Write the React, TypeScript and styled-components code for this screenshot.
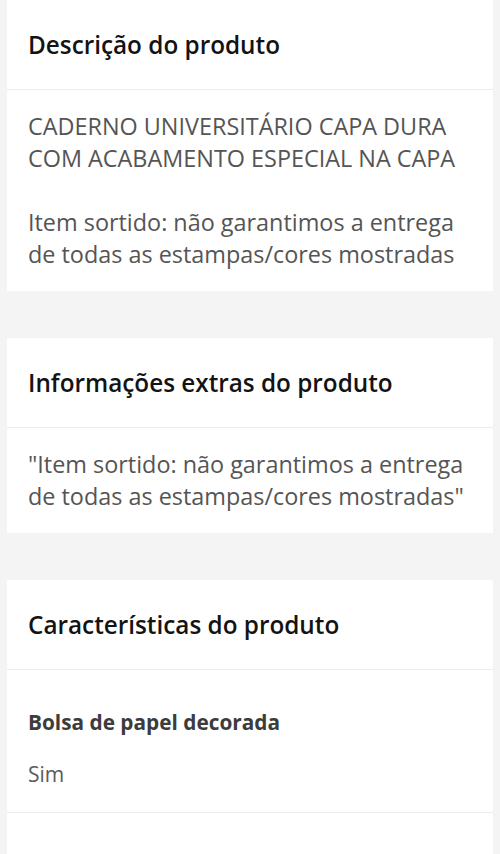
import React from "react";
import styled, { createGlobalStyle } from "styled-components";

const Global = createGlobalStyle`
  html, body { margin: 0; padding: 0; background: #f4f4f4; }
  body { font-family: "Open Sans", "Noto Sans", sans-serif; -webkit-font-smoothing: antialiased; }
  * { box-sizing: border-box; }
`;

const Page = styled.main`
  display: flex;
  flex-direction: column;
  gap: 47px;
  padding: 0 7px;
`;

const Card = styled.section`
  background: #ffffff;
`;

const CardHeader = styled.header`
  display: flex;
  align-items: center;
  height: 90px;
  padding: 0 21px;
  border-bottom: 1px solid #ececec;
`;

const Title = styled.h2`
  margin: 0;
  font-size: 24.3px;
  font-weight: 600;
  color: #131313;
  letter-spacing: 0;
`;

const CardBody = styled.div`
  padding: 20px 21px 21px;
`;

const Paragraph = styled.p`
  margin: 0;
  font-size: 23.4px;
  line-height: 32px;
  color: #555555;
  & + & { margin-top: 32px; }
`;

const SpecList = styled.dl`
  margin: 0;
  padding-bottom: 50px;
`;

const SpecRow = styled.div`
  display: flex;
  flex-direction: column;
  gap: 24px;
  padding: 38px 21px 24px;
  border-bottom: 1px solid #ececec;
`;

const SpecLabel = styled.dt`
  font-size: 20.8px;
  font-weight: 700;
  line-height: 28px;
  color: #3c3c3c;
`;

const SpecValue = styled.dd`
  margin: 0;
  font-size: 21px;
  line-height: 28px;
  color: #5a5a5a;
`;

export default function App() {
  return (
    <>
      <Global />
      <Page>
        <Card>
          <CardHeader>
            <Title>Descrição do produto</Title>
          </CardHeader>
          <CardBody>
            <Paragraph>CADERNO UNIVERSITÁRIO CAPA DURA COM ACABAMENTO ESPECIAL NA CAPA</Paragraph>
            <Paragraph>Item sortido: não garantimos a entrega de todas as estampas/cores mostradas</Paragraph>
          </CardBody>
        </Card>
        <Card>
          <CardHeader>
            <Title>Informações extras do produto</Title>
          </CardHeader>
          <CardBody>
            <Paragraph>"Item sortido: não garantimos a entrega de todas as estampas/cores mostradas"</Paragraph>
          </CardBody>
        </Card>
        <Card>
          <CardHeader>
            <Title>Características do produto</Title>
          </CardHeader>
          <SpecList>
            <SpecRow>
              <SpecLabel>Bolsa de papel decorada</SpecLabel>
              <SpecValue>Sim</SpecValue>
            </SpecRow>
          </SpecList>
        </Card>
      </Page>
    </>
  );
}
